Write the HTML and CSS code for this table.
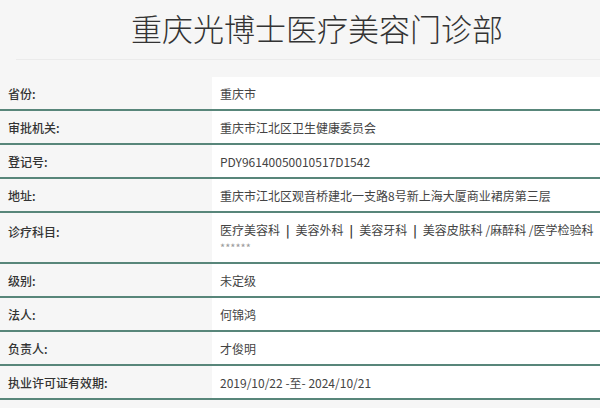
FILE: index.html
```html
<!DOCTYPE html>
<html lang="zh">
<head>
<meta charset="utf-8">
<link rel="stylesheet" href="styles.css">
</head>
<body>
<div class="page">
  <h1 class="title">重庆光博士医疗美容门诊部</h1>
  <div class="table">
    <div class="row"><div class="label">省份:</div><div class="value">重庆市</div></div>
    <div class="row"><div class="label">审批机关:</div><div class="value">重庆市江北区卫生健康委员会</div></div>
    <div class="row"><div class="label">登记号:</div><div class="value">PDY96140050010517D1542</div></div>
    <div class="row"><div class="label">地址:</div><div class="value">重庆市江北区观音桥建北一支路8号新上海大厦商业裙房第三层</div></div>
    <div class="row tall"><div class="label">诊疗科目:</div><div class="value multi"><div class="line">医疗美容科<b class="sep">|</b>美容外科<b class="sep">|</b>美容牙科<b class="sep">|</b>美容皮肤科 /麻醉科 /医学检验科</div><div class="line stars">******</div></div></div>
    <div class="row"><div class="label">级别:</div><div class="value">未定级</div></div>
    <div class="row"><div class="label">法人:</div><div class="value">何锦鸿</div></div>
    <div class="row"><div class="label">负责人:</div><div class="value">才俊明</div></div>
    <div class="row"><div class="label">执业许可证有效期:</div><div class="value">2019/10/22 -至- 2024/10/21</div></div>
  </div>
</div>
</body>
</html>
```
FILE: styles.css
```css
html, body {
  margin: 0;
  padding: 0;
  background: #f6f6f6;
  font-family: "Noto Sans CJK SC", "Noto Sans", sans-serif;
  color: #333;
}
.page {
  width: 600px;
  height: 408px;
  overflow: hidden;
}
.title {
  margin: 0 0 17px 16px;
  height: 60px;
  box-sizing: border-box;
  border-bottom: 1px solid #ebebeb;
  font-size: 31px;
  font-weight: 300;
  line-height: 56px;
  text-align: center;
  padding-left: 18px;
  color: #333;
}
.table {
  display: flex;
  flex-direction: column;
}
.row {
  display: grid;
  grid-template-columns: 212px 1fr;
  height: 34px;
  box-sizing: border-box;
  border-bottom: 2px solid #58867a;
}
.row.tall {
  height: 51px;
}
.label {
  display: flex;
  align-items: center;
  padding-left: 8px;
  font-size: 12px;
  font-weight: 500;
  color: #333;
  background: #f6f6f6;
}
.tall .label {
  align-items: flex-start;
  padding-top: 10px;
}
.value {
  display: flex;
  align-items: center;
  padding-left: 8px;
  background: #fff;
  font-size: 12px;
  color: #444;
  white-space: nowrap;
  overflow: hidden;
}
.value.multi {
  flex-direction: column;
  align-items: flex-start;
  justify-content: flex-start;
  padding-top: 9px;
}
.line {
  line-height: 16px;
}
.sep {
  color: #333;
  font-weight: 700;
  margin: 0 6px;
}
.stars {
  color: #999;
  font-size: 11px;
  line-height: 12px;
  margin-top: 3px;
}
```
